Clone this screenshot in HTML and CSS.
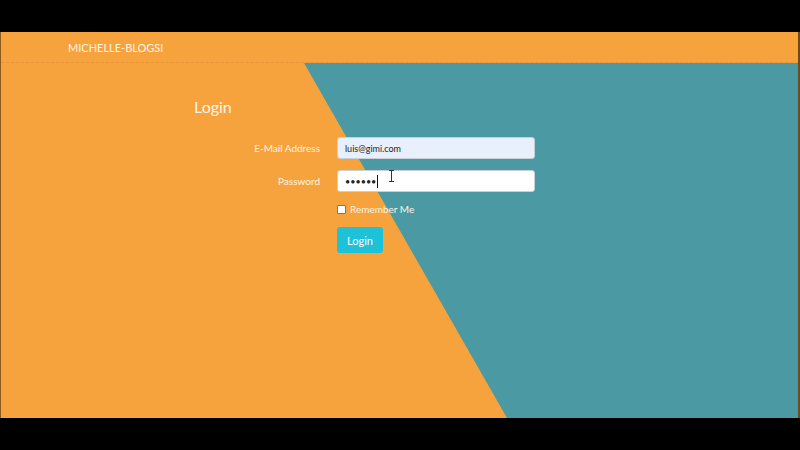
FILE: index.html
```html
<!DOCTYPE html>
<html lang="en">
<head>
<meta charset="utf-8">
<title>Michelle-Blogsi Login</title>
<link rel="stylesheet" href="styles.css">
</head>
<body>
<div class="frame">
  <nav class="navbar"><span class="brand">MICHELLE-BLOGSI</span></nav>
  <main class="content">
    <div class="teal"></div>
    <div class="card">
      <h1 class="title">Login</h1>
      <form class="form">
        <div class="row">
          <label class="label">E-Mail Address</label>
          <div class="input filled">luis@gimi.com</div>
        </div>
        <div class="row">
          <label class="label">Password</label>
          <div class="input"><span class="dots">••••••</span><span class="caret"></span></div>
        </div>
        <div class="row check-row">
          <span class="label"></span>
          <label class="check"><span class="box"></span>Remember Me</label>
        </div>
        <div class="row">
          <span class="label"></span>
          <button type="button" class="btn">Login</button>
        </div>
      </form>
    </div>
    <svg class="ibeam" width="7" height="12" viewBox="0 0 7 12"><path d="M1 0.5h5M3.5 0.5v11M1 11.5h5" stroke="#333" stroke-width="1" fill="none"/></svg>
  </main>
</div>
</body>
</html>
```
FILE: styles.css
```css
html, body { margin: 0; padding: 0; }
body {
  background: #000;
  width: 800px;
  height: 450px;
  overflow: hidden;
  font-family: "Lato", "Noto Sans", sans-serif;
}
.frame {
  margin-top: 32px;
  height: 386px;
  background: #f6a33d;
  border-left: 1px solid #8a5a20;
  border-right: 2px solid #6e4a1c;
  display: flex;
  flex-direction: column;
}
.navbar {
  height: 30px;
  border-bottom: 1px dashed #e8953a;
  display: flex;
  align-items: center;
  padding-left: 67px;
}
.brand {
  color: #fdf3e6;
  font-size: 11px;
}
.content {
  position: relative;
  flex: 1;
}
.teal {
  position: absolute;
  inset: 0;
  background: #4b9aa3;
  clip-path: polygon(303px 0, 100% 0, 100% 100%, 506px 100%);
}
.card {
  position: relative;
  padding: 34px 0 0 193px;
}
.title {
  margin: 0 0 21px 0;
  font-weight: 400;
  font-size: 16px;
  color: #fdf3e6;
}
.form { display: flex; flex-direction: column; }
.row {
  display: flex;
  align-items: center;
  margin-bottom: 11px;
}
.label {
  width: 126px;
  text-align: right;
  padding-right: 17px;
  font-size: 10px;
  color: #fdf3e6;
}
.input {
  height: 20px;
  box-sizing: content-box;
  border: 1px solid #c9cfd6;
  border-radius: 3px;
  background: #fff;
  font-size: 9px;
  color: #222;
  display: flex;
  align-items: center;
  padding-left: 7px;
  width: 189px;
}
.input.filled { background: #e8f0fe; }
.dots { font-size: 9px; color: #222; }
.caret { display: inline-block; width: 1px; height: 13px; background: #111; margin-left: 1px; }
.check-row { margin-top: 0; margin-bottom: 12px; }
.check {
  display: flex;
  align-items: center;
  font-size: 10px;
  color: #fdf3e6;
}
.box {
  width: 7px; height: 7px;
  border: 1px solid #777;
  background: #fff;
  border-radius: 1px;
  margin-right: 4px;
}
.btn {
  width: 46px;
  height: 26px;
  padding: 0;
  border: none;
  border-radius: 3px;
  background: #1dc1d8;
  color: #fdfdfd;
  font-family: inherit;
  font-size: 11px;
}
.ibeam { position: absolute; left: 387px; top: 107px; }
```
